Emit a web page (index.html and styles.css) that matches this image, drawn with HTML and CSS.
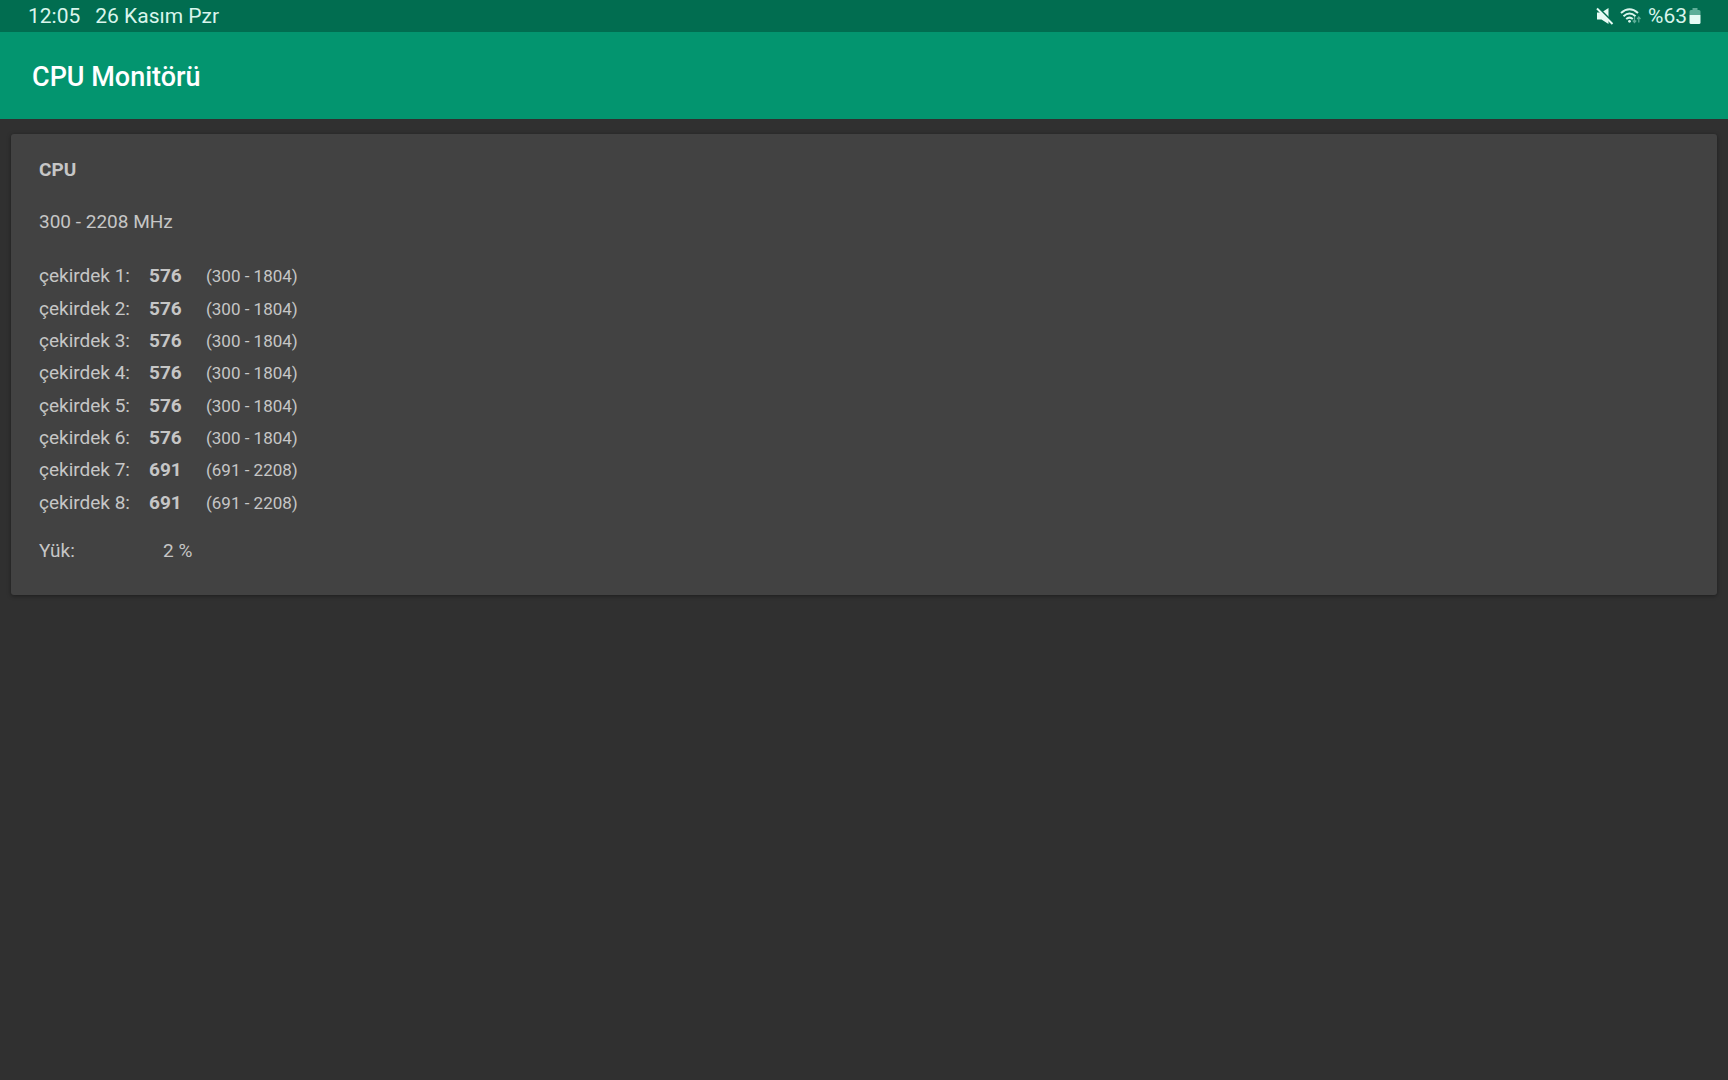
FILE: index.html
```
<!DOCTYPE html>
<html lang="tr">

<head>
    <meta charset="UTF-8">
    <meta name="viewport" content="width=device-width, initial-scale=1.0">
    <title>CPU Monitörü</title>
    <link rel="stylesheet" href="styles.css">
</head>

<body>
    <div class="statusBar">
        <div class="left">
            <span>12:05</span>
            <span>26 Kasım Pzr</span>
        </div>
        <div class="right">
            <svg class="mute" width="18" height="18" viewBox="0 0 18 18" aria-hidden="true">
                <path d="M1 5.500h4.500L12.500 1v16l-7-4.500H1z" fill="#e6fbf4" />
                <path d="M2 .5l15 15" stroke="#016d50" stroke-width="2" />
                <path d="M1 1.500l15.500 15.500" stroke="#e6fbf4" stroke-width="2" />
            </svg>
            <svg class="wifi" width="22" height="18" viewBox="0 0 22 18" aria-hidden="true">
                <g fill="none" stroke="#d9f5ec" stroke-width="2">
                    <path d="M1 6q8.500-7.500 17 0" />
                    <path d="M3.500 9.200q6-5.400 12 0" />
                    <path d="M6.200 12q3.300-2.800 6.600 0" />
                </g>
                <circle cx="9.500" cy="14.300" r="1.400" fill="#d9f5ec" />
                <path d="M14.500 10v5M12.800 13.500l1.700 2 1.700-2M18.800 15.500v-5M17.100 12l1.700-2 1.700 2" fill="none" stroke="#5fae98" stroke-width="1.200" />
            </svg>
            <span>%63</span>
            <svg class="battery" width="12" height="18" viewBox="0 0 12 18" aria-hidden="true">
                <path d="M3.500 1h5v2H10q1.500 0 1.500 1.500V8H.5V4.500Q.5 3 2 3h1.500z" fill="#5fae98" />
                <path d="M.5 8h11v7.500q0 1.500-1.500 1.500H2Q.5 17 .5 15.500z" fill="#e6fbf4" />
            </svg>
        </div>
    </div>
    <header class="appBar">
        <h1>CPU Monitörü</h1>
    </header>
    <main class="card">
        <h2>CPU</h2>
        <p class="freq">300 - 2208 MHz</p>
        <table class="cores">
            <tr>
                <th scope="row">çekirdek 1:</th>
                <td class="now">576</td>
                <td class="range">(300 - 1804)</td>
            </tr>
            <tr>
                <th scope="row">çekirdek 2:</th>
                <td class="now">576</td>
                <td class="range">(300 - 1804)</td>
            </tr>
            <tr>
                <th scope="row">çekirdek 3:</th>
                <td class="now">576</td>
                <td class="range">(300 - 1804)</td>
            </tr>
            <tr>
                <th scope="row">çekirdek 4:</th>
                <td class="now">576</td>
                <td class="range">(300 - 1804)</td>
            </tr>
            <tr>
                <th scope="row">çekirdek 5:</th>
                <td class="now">576</td>
                <td class="range">(300 - 1804)</td>
            </tr>
            <tr>
                <th scope="row">çekirdek 6:</th>
                <td class="now">576</td>
                <td class="range">(300 - 1804)</td>
            </tr>
            <tr>
                <th scope="row">çekirdek 7:</th>
                <td class="now">691</td>
                <td class="range">(691 - 2208)</td>
            </tr>
            <tr>
                <th scope="row">çekirdek 8:</th>
                <td class="now">691</td>
                <td class="range">(691 - 2208)</td>
            </tr>
        </table>
        <div class="load">
            <span class="label">Yük:</span>
            <span>2 %</span>
        </div>
    </main>
</body>

</html>
```

FILE: styles.css
```
* {
    margin: 0;
    padding: 0;
    box-sizing: border-box;
}

body {
    font-family: Roboto, "Noto Sans", sans-serif;
    font-size: 19px;
    line-height: 24px;
    color: #c6c6c6;
    background-color: #303030;
}

.statusBar {
    display: flex;
    justify-content: space-between;
    align-items: center;
    height: 32px;
    padding: 0 27px 0 28px;
    font-size: 21px;
    color: #d9f5ec;
    background-color: #016d50;
}

.statusBar .left {
    display: flex;
    gap: 15px;
}

.statusBar .right {
    display: flex;
    align-items: center;
}

.statusBar .mute {
    margin-right: 6px;
}

.statusBar .wifi {
    margin-right: 6px;
}

.statusBar .battery {
    margin-left: 2px;
}

.appBar {
    display: flex;
    align-items: center;
    height: 87px;
    padding: 2px 32px 0;
    background-color: #03956f;
}

.appBar h1 {
    font-size: 27px;
    font-weight: 500;
    line-height: 32px;
    color: #fff;
}

.card {
    margin: 15px 11px;
    padding: 24px 28px 32px;
    border-radius: 3px;
    background-color: #424242;
    box-shadow: 0 1px 4px rgba(0, 0, 0, 0.4);
}

.card h2 {
    font-size: 19px;
    font-weight: 700;
}

.freq {
    margin-top: 28px;
}

.cores {
    height: 259px;
    margin-top: 26px;
    border-collapse: collapse;
}

.cores th {
    width: 110px;
    font-weight: 400;
    text-align: left;
}

.cores .now {
    width: 57px;
    font-weight: 700;
}

.cores .range {
    font-size: 17px;
}

.load {
    display: flex;
    margin-top: 20px;
}

.load .label {
    width: 124px;
}
```
